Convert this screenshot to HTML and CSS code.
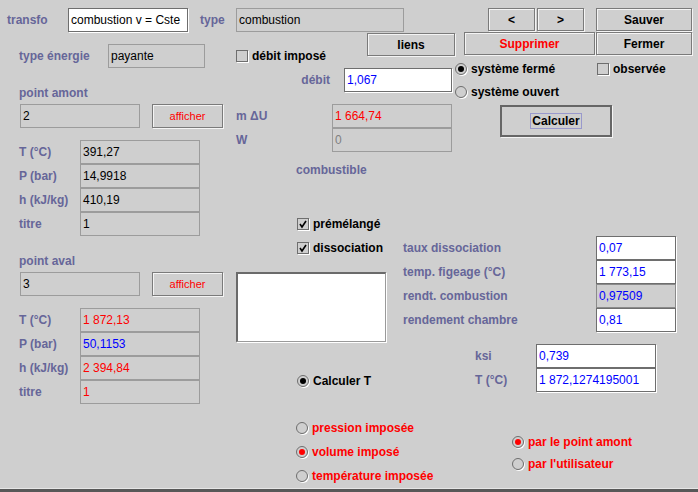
FILE: index.html
```html
<!DOCTYPE html>
<html lang="fr">
<head>
  <meta charset="UTF-8">
  <title>transfo combustion</title>
  <link rel="stylesheet" href="styles.css">
</head>
<body>
  <div class="frame">

    <!-- colonne gauche : points amont / aval -->
    <div class="left">
      <div class="row transfoRow">
        <span class="lbl transfoLbl">transfo</span>
        <span class="field edit transfoField">combustion v = Cste</span>
        <span class="lbl typeLbl">type</span>
      </div>

      <div class="row energyRow">
        <span class="lbl energyLbl">type énergie</span>
        <span class="field energyField">payante</span>
      </div>

      <div class="lbl heading">point amont</div>
      <div class="row pointRow">
        <span class="field pointField">2</span>
        <span class="btn small">afficher</span>
      </div>
      <div class="stateBlock">
        <div class="kv"><span class="lbl">T (°C)</span><span class="field">391,27</span></div>
        <div class="kv"><span class="lbl">P (bar)</span><span class="field">14,9918</span></div>
        <div class="kv"><span class="lbl">h (kJ/kg)</span><span class="field">410,19</span></div>
        <div class="kv"><span class="lbl">titre</span><span class="field">1</span></div>
      </div>

      <div class="lbl heading">point aval</div>
      <div class="row pointRow">
        <span class="field pointField">3</span>
        <span class="btn small">afficher</span>
      </div>
      <div class="stateBlock">
        <div class="kv"><span class="lbl">T (°C)</span><span class="field red">1 872,13</span></div>
        <div class="kv"><span class="lbl">P (bar)</span><span class="field blue">50,1153</span></div>
        <div class="kv"><span class="lbl">h (kJ/kg)</span><span class="field red">2 394,84</span></div>
        <div class="kv"><span class="lbl">titre</span><span class="field red">1</span></div>
      </div>
    </div>

    <!-- partie principale -->
    <div class="main">
      <div class="top">
        <div class="mid">
          <span class="field typeField">combustion</span>
          <div class="row liensRow">
            <label class="check debitCheck"><span class="box"></span>débit imposé</label>
            <span class="btn liens">liens</span>
          </div>
          <div class="row debitRow">
            <span class="lbl debitLbl">débit</span>
            <span class="field edit blue debitField">1,067</span>
          </div>
          <div class="row energyVal first">
            <span class="lbl">m ΔU</span>
            <span class="field red">1 664,74</span>
          </div>
          <div class="row energyVal">
            <span class="lbl">W</span>
            <span class="field grey">0</span>
          </div>
          <div class="lbl combustible">combustible</div>
        </div>

        <div class="right">
          <div class="row navRow">
            <span class="btn nav">&lt;</span>
            <span class="btn nav next">&gt;</span>
            <span class="btn wide save">Sauver</span>
          </div>
          <div class="row actionRow">
            <span class="btn delete">Supprimer</span>
            <span class="btn wide close">Fermer</span>
          </div>
          <div class="row systemRow">
            <label class="radio closedSys"><span class="dot on"></span>système fermé</label>
            <label class="check"><span class="box"></span>observée</label>
          </div>
          <div class="row systemRow second">
            <label class="radio"><span class="dot"></span>système ouvert</label>
          </div>
          <span class="btn calc"><span class="focus">Calculer</span></span>
        </div>
      </div>

      <div class="mix">
        <div class="mixLeft">
          <label class="check premix"><span class="box checked"><svg width="10" height="10" viewBox="0 0 10 10"><path d="M2 5 L4 8 L8 2" fill="none" stroke="#000" stroke-width="1.6"/></svg></span>prémélangé</label>
          <label class="check dissoc"><span class="box checked"><svg width="10" height="10" viewBox="0 0 10 10"><path d="M2 5 L4 8 L8 2" fill="none" stroke="#000" stroke-width="1.6"/></svg></span>dissociation</label>
          <div class="notes"></div>
        </div>
        <div class="mixRight">
          <div class="param"><span class="lbl">taux dissociation</span><span class="field edit blue">0,07</span></div>
          <div class="param"><span class="lbl">temp. figeage (°C)</span><span class="field edit blue">1 773,15</span></div>
          <div class="param"><span class="lbl">rendt. combustion</span><span class="field locked blue">0,97509</span></div>
          <div class="param"><span class="lbl">rendement chambre</span><span class="field edit blue">0,81</span></div>
        </div>
      </div>

      <div class="calcRow">
        <div class="calcLeft">
          <label class="radio"><span class="dot on"></span>Calculer T</label>
        </div>
        <div class="calcRight">
          <div class="param"><span class="lbl">ksi</span><span class="field edit blue">0,739</span></div>
          <div class="param"><span class="lbl">T (°C)</span><span class="field edit blue">1 872,1274195001</span></div>
        </div>
      </div>

      <div class="modes">
        <div class="modeLeft">
          <label class="radio redText"><span class="dot"></span>pression imposée</label>
          <label class="radio redText"><span class="dot on redDot"></span>volume imposé</label>
          <label class="radio redText"><span class="dot"></span>température imposée</label>
        </div>
        <div class="modeRight">
          <label class="radio redText"><span class="dot on redDot"></span>par le point amont</label>
          <label class="radio redText"><span class="dot"></span>par l'utilisateur</label>
        </div>
      </div>
    </div>

  </div>
</body>
</html>
```

FILE: styles.css
```css
body {
  margin: 0;
  background-color: #cfcfcf;
  font-family: "Liberation Sans", Arial, sans-serif;
  font-size: 12px;
  font-weight: bold;
}

.frame {
  display: flex;
  width: 698px;
  height: 489px;
  border-bottom: 3px solid #585858;
  box-shadow: inset 0 -1px 0 #e6e6e6;
}

.row {
  display: flex;
  align-items: center;
}

.lbl {
  color: #666699;
  white-space: nowrap;
}

/* champs texte */
.field {
  box-sizing: border-box;
  height: 24px;
  line-height: 22px;
  padding-left: 2px;
  border: 1px solid #9c9c9c;
  color: #000;
  font-weight: normal;
  white-space: nowrap;
  overflow: hidden;
}
.field.edit {
  background-color: #fff;
  border-color: #6e6e6e;
  box-shadow: 1px 1px 0 #fff;
}
.field.locked {
  border-color: #8a8a8a;
  box-shadow: 1px 1px 0 #fff;
}
.blue { color: #0000ff; }
.red { color: #ff0000; }
.grey { color: #808080; }

/* boutons */
.btn {
  box-sizing: border-box;
  display: flex;
  align-items: center;
  justify-content: center;
  height: 23px;
  border: 1px solid #7a7a7a;
  box-shadow: inset 1px 1px 0 #f4f4f4, 1px 1px 0 #f4f4f4;
  color: #000;
}
.btn.small {
  width: 71px;
  height: 24px;
  margin-left: 12px;
  color: #ff0000;
  font-size: 11px;
  font-weight: normal;
}

/* radio & checkbox */
.radio, .check {
  display: flex;
  align-items: center;
  height: 16px;
  color: #000;
  white-space: nowrap;
}
.dot, .box {
  box-sizing: border-box;
  position: relative;
  width: 12px;
  height: 12px;
  margin-right: 4px;
  border: 1px solid #6e6e6e;
  box-shadow: 1px 1px 0 #fff;
}
.dot {
  border-radius: 50%;
}
.dot.on::after {
  content: "";
  position: absolute;
  left: 2px;
  top: 2px;
  width: 6px;
  height: 6px;
  border-radius: 50%;
  background-color: #000;
}
.dot.redDot::after {
  background-color: #ff0000;
}
.box svg {
  display: block;
  margin: 0;
}
.redText {
  color: #ff0000;
}

/* colonne gauche */
.left {
  display: flex;
  flex-direction: column;
  width: 230px;
}
.transfoRow {
  margin-top: 8px;
  padding-left: 7px;
}
.transfoLbl { width: 61px; }
.transfoField { width: 120px; }
.typeLbl { margin-left: 12px; }

.energyRow {
  margin-top: 12px;
  padding-left: 19px;
}
.energyLbl { width: 89px; }
.energyField { width: 97px; }

.heading {
  height: 16px;
  line-height: 16px;
  margin-top: 17px;
  padding-left: 19px;
}
.pointRow {
  margin-top: 3px;
  padding-left: 20px;
}
.pointField { width: 120px; }

.stateBlock {
  margin-top: 12px;
}
.kv {
  display: flex;
  align-items: center;
  padding-left: 19px;
}
.kv .lbl { width: 61px; }
.kv .field { width: 120px; }

/* partie principale */
.main {
  display: flex;
  flex-direction: column;
  width: 468px;
}
.top {
  display: flex;
}
.mid {
  display: flex;
  flex-direction: column;
  width: 219px;
  padding-left: 6px;
}
.typeField {
  width: 168px;
  margin-top: 8px;
}
.liensRow {
  align-items: flex-start;
  justify-content: space-between;
}
.debitCheck {
  margin-top: 16px;
}
.liens {
  width: 88px;
  margin-top: 1px;
}
.debitRow {
  margin-top: 4px;
}
.debitLbl {
  width: 94px;
  text-align: right;
}
.debitField {
  width: 108px;
  margin-left: 14px;
}
.energyVal .lbl { width: 96px; }
.energyVal .field { width: 120px; }
.energyVal.first { margin-top: 12px; }
.combustible {
  height: 16px;
  line-height: 16px;
  margin-top: 10px;
  padding-left: 60px;
}

.right {
  display: flex;
  flex-direction: column;
  width: 243px;
}
.navRow {
  margin-top: 8px;
  padding-left: 33px;
}
.nav { width: 47px; }
.nav.next { margin-left: 2px; }
.wide { width: 96px; }
.save { margin-left: 12px; }
.actionRow {
  margin-top: 1px;
  padding-left: 9px;
}
.delete {
  width: 131px;
  color: #ff0000;
}
.close { margin-left: 1px; }
.systemRow {
  margin-top: 6px;
}
.systemRow.second {
  margin-top: 7px;
}
.closedSys {
  width: 142px;
}
.calc {
  width: 112px;
  height: 32px;
  margin-top: 5px;
  margin-left: 45px;
  border: 2px solid #666;
  box-shadow: 1px 1px 0 #f4f4f4;
}
.focus {
  padding: 0 1px;
  line-height: 14px;
  border: 1px solid #9999cc;
}

.mix {
  display: flex;
}
.mixLeft {
  display: flex;
  flex-direction: column;
  width: 167px;
  padding-left: 6px;
}
.premix {
  margin-top: 38px;
  margin-left: 61px;
}
.dissoc {
  margin-top: 8px;
  margin-left: 61px;
}
.notes {
  box-sizing: border-box;
  width: 150px;
  height: 70px;
  margin-top: 16px;
  background-color: #fff;
  border-top: 2px solid #6a6a6a;
  border-left: 2px solid #6a6a6a;
  border-right: 1px solid #9a9a9a;
  border-bottom: 1px solid #9a9a9a;
  box-shadow: 1px 1px 0 #fff;
}
.mixRight {
  margin-top: 58px;
}
.param {
  display: flex;
  align-items: center;
}
.mixRight .lbl { width: 193px; }
.mixRight .field { width: 80px; }

.calcRow {
  display: flex;
}
.calcLeft {
  width: 178px;
  padding-left: 67px;
}
.calcLeft .radio {
  margin-top: 31px;
}
.calcRight {
  margin-top: 2px;
}
.calcRight .lbl { width: 61px; }
.calcRight .field { width: 120px; }

.modes {
  display: flex;
}
.modeLeft {
  display: flex;
  flex-direction: column;
  gap: 8px;
  width: 216px;
  margin-top: 28px;
  padding-left: 66px;
}
.modeRight {
  display: flex;
  flex-direction: column;
  gap: 6px;
  margin-top: 42px;
}
```
